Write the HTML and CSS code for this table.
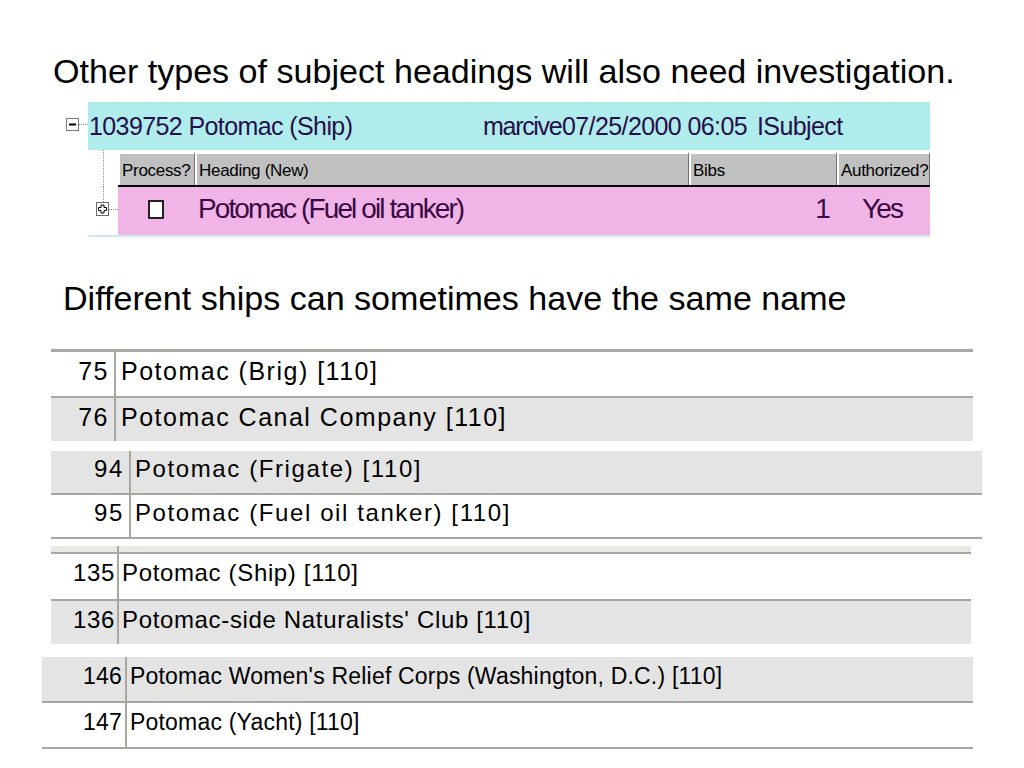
FILE: index.html
```html
<!DOCTYPE html>
<html>
<head>
<meta charset="utf-8">
<link rel="stylesheet" href="styles.css">
</head>
<body>
<div class="slide">
  <h1 class="title">Other types of subject headings will also need investigation.</h1>

  <div class="panel">
    <div class="prow">
      <div class="gut g1">
        <svg class="tbox" width="13" height="13" viewBox="0 0 13 13"><rect x="0.5" y="0.5" width="12" height="12" fill="#fff" stroke="#7a7a7a"/><rect x="3" y="5.5" width="7" height="2" fill="#000"/></svg>
        <span class="hdot"></span>
      </div>
      <div class="band">
        <span class="c c-id">1039752 Potomac (Ship)</span>
        <span class="c c-user">marcive</span>
        <span class="c c-date">07/25/2000 06:05</span>
        <span class="c c-type">ISubject</span>
      </div>
    </div>
    <div class="prow">
      <div class="gut g2"><span class="vl"></span></div>
      <div class="hdr">
        <div class="hc h-proc">Process?</div>
        <div class="hc h-head">Heading (New)</div>
        <div class="hc h-bibs">Bibs</div>
        <div class="hc h-auth">Authorized?</div>
      </div>
    </div>
    <div class="prow">
      <div class="gut g3">
        <span class="vl2"></span>
        <div class="pbox">
          <svg class="tbox" width="13" height="14" viewBox="0 0 13 14"><rect x="0.5" y="0.5" width="12" height="13" fill="#fff" stroke="#6a6a6a"/><path d="M5 3h3v2.5h2.5v3H8V11H5V8.5H2.5v-3H5z" fill="#fff" stroke="#000" stroke-width="1"/></svg>
          <span class="hl"></span>
        </div>
      </div>
      <div class="pink">
        <div class="pc p-proc"><span class="chk"></span></div>
        <div class="pc p-head">Potomac (Fuel oil tanker)</div>
        <div class="pc p-bibs">1</div>
        <div class="pc p-auth">Yes</div>
      </div>
    </div>
    <div class="pbase"></div>
  </div>

  <h2 class="sub">Different ships can sometimes have the same name</h2>

  <div class="tbl t1">
    <div class="r"><div class="n">75</div><div class="h">Potomac (Brig) [110]</div></div>
    <div class="r g"><div class="n">76</div><div class="h">Potomac Canal Company [110]</div></div>
  </div>

  <div class="tbl t2">
    <div class="r g"><div class="n">94</div><div class="h">Potomac (Frigate) [110]</div></div>
    <div class="r"><div class="n">95</div><div class="h">Potomac (Fuel oil tanker) [110]</div></div>
  </div>

  <div class="tbl t3">
    <div class="strip"><span class="n"></span></div>
    <div class="r"><div class="n">135</div><div class="h">Potomac (Ship) [110]</div></div>
    <div class="r g"><div class="n">136</div><div class="h">Potomac-side Naturalists' Club [110]</div></div>
  </div>

  <div class="tbl t4">
    <div class="r g"><div class="n">146</div><div class="h">Potomac Women's Relief Corps (Washington, D.C.) [110]</div></div>
    <div class="r"><div class="n">147</div><div class="h">Potomac (Yacht) [110]</div></div>
  </div>
</div>
</body>
</html>
```

FILE: styles.css
```css
html, body {
  margin: 0;
  padding: 0;
  background: #ffffff;
}

.slide {
  width: 1024px;
  height: 768px;
  overflow: hidden;
  font-family: "Liberation Sans", Arial, sans-serif;
  color: #000;
}

.title,
.sub {
  font-weight: normal;
  font-size: 34.1px;
  line-height: 40px;
  margin: 0;
  white-space: nowrap;
}

.title {
  margin: 51px 0 0 53px;
}

/* ---------- top panel ---------- */
.panel {
  margin: 11px 0 0 60px;
  width: 870px;
}

.prow {
  display: flex;
}

.gut {
  flex: none;
}

.g1 {
  width: 28px;
  display: flex;
  align-items: flex-start;
  padding-top: 16px;
  box-sizing: border-box;
  padding-left: 6px;
}

.tbox {
  display: block;
  flex: none;
}

.hdot {
  width: 9px;
  margin-top: 6px;
  border-top: 1px dotted #8c8c8c;
}

.band {
  flex: 1;
  height: 48px;
  background: #b1ecec;
  display: flex;
  color: #26104a;
  font-size: 25px;
  letter-spacing: -0.6px;
  line-height: 48px;
  white-space: nowrap;
}

.c {
  display: block;
}

.c-id { width: 394px; padding-left: 1px; }
.c-user { width: 79px; letter-spacing: -1.3px; }
.c-date { width: 195px; }
.c-type { flex: 1; }

.g2 {
  width: 58px;
  padding-left: 43px;
  box-sizing: border-box;
  display: flex;
}

.vl {
  display: block;
  border-left: 1px dotted #8c8c8c;
}

.hdr {
  flex: 1;
  margin-top: 2px;
  height: 33px;
  border-bottom: 2px solid #000;
  display: flex;
  font-size: 17px;
  line-height: 20px;
  letter-spacing: -0.3px;
  white-space: nowrap;
}

.hc {
  background: #c0c0c0;
  border-top: 2px solid #ffffff;
  border-left: 2px solid #ffffff;
  border-right: 1px solid #707070;
  box-sizing: border-box;
  padding: 7px 0 0 2px;
  overflow: hidden;
}

.h-proc { width: 77px; }
.h-head { width: 494px; }
.h-bibs { width: 148px; }
.h-auth { width: 93px; }

.g3 {
  width: 58px;
  padding-left: 36px;
  box-sizing: border-box;
  display: flex;
  flex-direction: column;
}

.vl2 {
  display: block;
  height: 15px;
  margin-left: 7px;
  border-left: 1px dotted #8c8c8c;
}

.pbox {
  display: flex;
  align-items: center;
}

.hl {
  width: 9px;
  border-top: 1px dotted #8c8c8c;
}

.pink {
  flex: 1;
  height: 48px;
  background: #f0b5e6;
  display: flex;
  color: #3b0a45;
  font-size: 28px;
  line-height: 44px;
  letter-spacing: -1.9px;
  white-space: nowrap;
}

.pc {
  box-sizing: border-box;
}

.p-proc {
  width: 77px;
  padding: 13px 0 0 30px;
}

.chk {
  display: block;
  width: 16px;
  height: 19px;
  box-sizing: border-box;
  border: 2px solid #202020;
  background: #ffffff;
}

.p-head { width: 494px; padding-left: 3px; }
.p-bibs { width: 148px; text-align: right; padding-right: 8px; }
.p-auth { width: 93px; padding-left: 25px; }

.pbase {
  margin-left: 28px;
  height: 2px;
  background: #cce8f2;
}

/* ---------- second part ---------- */
.sub {
  margin: 41px 0 0 63px;
}

.tbl {
  display: flex;
  flex-direction: column;
  font-size: 25px;
  line-height: 38px;
  white-space: nowrap;
}

.r {
  display: flex;
  height: 44px;
  background: #ffffff;
}

.r.g {
  background: #e4e4e4;
}

.n {
  flex: none;
  box-sizing: border-box;
  text-align: right;
  border-right: 2px solid #a9a8a0;
}

.h {
  flex: 1;
  overflow: hidden;
}

.t1 {
  margin: 31px 0 0 51px;
  width: 922px;
  border-top: 3px solid #abaaa2;
  letter-spacing: 1.5px;
}
.t1 .r + .r { border-top: 2px solid #a9a8a0; }
.t1 .r:last-child { height: 43px; }
.t1 .n { width: 65px; padding-right: 5px; }
.t1 .h { padding-left: 5px; }

.t2 {
  margin: 10px 0 0 51px;
  width: 931px;
  font-size: 24px;
  letter-spacing: 1.6px;
}
.t2 .r { height: 42px; border-bottom: 2px solid #a9a8a0; line-height: 36px; }
.t2 .n { width: 80px; padding-right: 5px; }
.t2 .h { padding-left: 4px; }

.t3 {
  margin: 7px 0 0 51px;
  width: 920px;
  font-size: 24px;
  letter-spacing: 0.65px;
}
.t3 .strip {
  display: flex;
  height: 6px;
  background: #e9e9e4;
  border-bottom: 2px solid #a9a8a0;
}
.t3 .r { height: 45px; }
.t3 .r + .r { border-top: 2px solid #a9a8a0; height: 43px; }
.t3 .n { width: 68px; padding-right: 2px; }
.t3 .h { padding-left: 3px; }

.t4 {
  margin: 13px 0 0 42px;
  width: 931px;
  font-size: 23px;
  letter-spacing: 0.2px;
}
.t4 .r { height: 44px; border-bottom: 2px solid #a9a8a0; line-height: 38px; }
.t4 .n { width: 85px; padding-right: 3px; }
.t4 .h { padding-left: 3px; }
```
